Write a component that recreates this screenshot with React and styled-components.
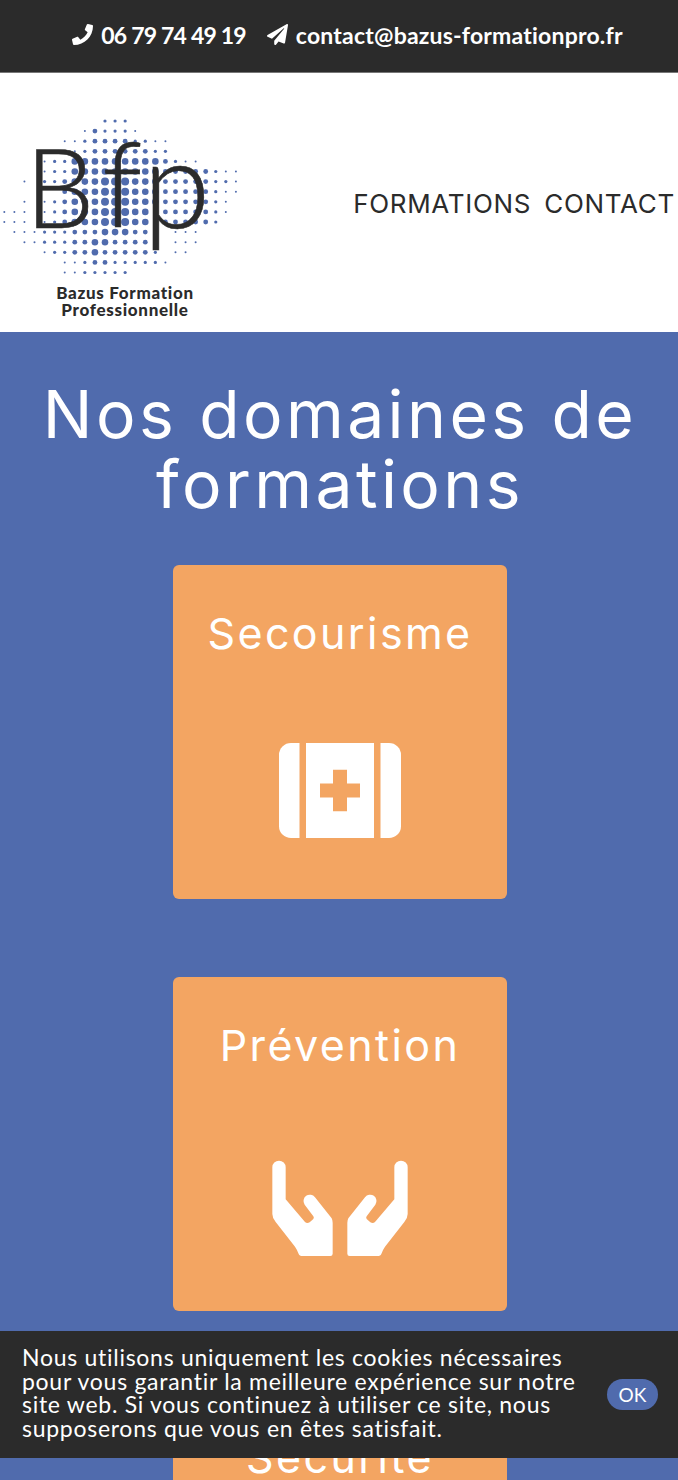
import React from 'react'
import styled, { createGlobalStyle } from 'styled-components'
import { FaPhone, FaPaperPlane } from 'react-icons/fa'

const GlobalStyle = createGlobalStyle`
  html, body {
    margin: 0;
    padding: 0;
    height: 100%;
    overflow: hidden;
    background: #506bad;
  }
  #root {
    height: 100%;
  }
`

const Page = styled.div`
  height: 1480px;
  overflow: hidden;
  font-family: "Inter", "Liberation Sans", sans-serif;
  color: #fff;
`

const TopBar = styled.div`
  display: flex;
  justify-content: center;
  align-items: center;
  gap: 21px;
  box-sizing: content-box;
  height: 69px;
  padding: 0 0 3px 17px;
  background: #2b2b2b;
  border-bottom: 1px solid #777;
`

const TopLink = styled.span`
  display: flex;
  align-items: center;
  gap: 8px;
  font-family: "Lato", "Liberation Sans", sans-serif;
  font-variant-ligatures: none;
  font-weight: 700;
  font-size: 23px;
  letter-spacing: ${p => p.$spacing || '0'};
  white-space: nowrap;
`

const Header = styled.header`
  display: flex;
  align-items: center;
  justify-content: space-between;
  height: 259px;
  background: #fff;
`

const LogoWrap = styled.div`
  align-self: flex-start;
  width: 250px;
  height: 230px;
  margin-top: 27px;
`

const LogoCaption = styled.text`
  font-family: "Lato", "Liberation Sans", sans-serif;
  font-variant-ligatures: none;
  font-weight: 900;
  font-size: 17px;
  letter-spacing: 0.7px;
  fill: #2b2b2b;
  text-anchor: middle;
`

const LogoLetter = styled.text`
  font-family: "Lato", "Liberation Sans", sans-serif;
  font-weight: 300;
  font-size: ${p => p.$size}px;
  fill: #2b2b2b;
  stroke: #2b2b2b;
  stroke-width: 0.6px;
`

const Nav = styled.nav`
  display: flex;
  gap: 13px;
  padding-right: 3px;
  margin-top: 1px;
  font-size: 26px;
  font-weight: 400;
  letter-spacing: 0.7px;
  color: #2b2b2b;
`

const Main = styled.main`
  display: flex;
  flex-direction: column;
  align-items: center;
  padding: 47px 0 0 2px;
`

const Title = styled.h1`
  margin: 0 0 46px;
  width: 640px;
  font-size: 66px;
  line-height: 70px;
  font-weight: 400;
  letter-spacing: 3.4px;
  text-align: center;
`

const CardList = styled.div`
  display: flex;
  flex-direction: column;
  gap: 78px;
`

const Card = styled.div`
  display: flex;
  flex-direction: column;
  align-items: center;
  box-sizing: border-box;
  width: 334px;
  height: 334px;
  padding-top: 41px;
  border-radius: 6px;
  background: #f3a562;
`

const CardTitle = styled.h2`
  margin: 0;
  font-size: 43px;
  line-height: 54px;
  font-weight: 400;
  letter-spacing: 2.4px;
`

const CardIcon = styled.svg`
  display: block;
  margin-top: ${p => p.$offset}px;
`

const CookieBar = styled.div`
  position: fixed;
  left: 0;
  right: 0;
  top: 1331px;
  display: flex;
  align-items: center;
  justify-content: space-between;
  box-sizing: border-box;
  height: 127px;
  padding: 0 20px 0 22px;
  background: #2b2b2b;
`

const CookieText = styled.p`
  margin: 0 0 3px;
  width: 570px;
  font-family: "Lato", "Liberation Sans", sans-serif;
  font-variant-ligatures: none;
  font-size: 23px;
  line-height: 23.5px;
  font-weight: 400;
  letter-spacing: 0.72px;
`

const OkButton = styled.button`
  width: 51px;
  height: 31px;
  padding: 0;
  border: 0;
  border-radius: 16px;
  background: #506bad;
  color: #fff;
  font-family: "Lato", "Liberation Sans", sans-serif;
  font-size: 19px;
`

// halftone of the logo: one string per row, one digit per column, digit = dot size
const DOT_ROWS = [
  '000000000022200000000000',
  '000000001322210000000000',
  '000000112333322110000000',
  '000000012333333220000000',
  '000012244444444432110000',
  '000012244444444433333211',
  '001022344455544433333221',
  '000000344455544433333211',
  '001012344455544433333210',
  '111012344455544333333210',
  '111012344455544333333200',
  '011122233344433201110000',
  '001122233443333201110000',
  '000012233433333201100000',
  '000000112332222210000000',
  '000000112222200000000000',
]
const DOT_SIZES = [0, 1, 1.6, 2.4, 3.3, 4]

const LogoDots = () => (
  <g fill="#506bad">
    {DOT_ROWS.map((row, j) =>
      row.split('').map((d, i) =>
        d === '0' ? null : (
          <circle key={`${j}-${i}`} cx={4.3 + i * 10.07} cy={21 + j * 10.1} r={DOT_SIZES[d]} />
        )
      )
    )}
  </g>
)

const Logo = () => (
  <LogoWrap>
    <svg width="250" height="230" viewBox="0 0 250 230">
      <LogoDots />
      <LogoLetter $size={110} x="25" y="128">B</LogoLetter>
      <LogoLetter $size={118} x="102" y="128">f</LogoLetter>
      <LogoLetter $size={122} x="143" y="128">p</LogoLetter>
      <LogoCaption x="125" y="199">Bazus Formation</LogoCaption>
      <LogoCaption x="125" y="216">Professionnelle</LogoCaption>
    </svg>
  </LogoWrap>
)

const KitIcon = () => (
  <CardIcon $offset={83} width="122" height="95" viewBox="0 0 122 96" preserveAspectRatio="none" fill="#fff">
    <path d="M12 0h8.500v96H12A12 12 0 0 1 0 84V12A12 12 0 0 1 12 0z" />
    <path d="M101.500 0H110a12 12 0 0 1 12 12v72a12 12 0 0 1-12 12h-8.500z" />
    <path fillRule="evenodd" d="M27 0h68v96H27z M54 27v14H41v14h13v14h14V55h13V41H68V27z" />
  </CardIcon>
)

const HANDS_PATH =
  'M37 52a20 20 0 0 1 40 0v96l58 68q6 6 14 1l11-10q3-4 0-8l-26-35a18 18 0 0 1 31-22l50 63q3 6 3 13v93q0 7-7 7h-88q-6 0-8-8q-3-10-10-20l-58-74q-10-12-10-24z'

const HandsIcon = () => (
  <CardIcon $offset={88} width="136" height="97" viewBox="36 30 408 291" fill="#fff">
    <path d={HANDS_PATH} />
    <path d={HANDS_PATH} transform="matrix(-1 0 0 1 480 0)" />
  </CardIcon>
)

const App = () => (
  <Page>
    <GlobalStyle />
    <TopBar>
      <TopLink $spacing="-0.8px">
        <FaPhone size={21} />
        06 79 74 49 19
      </TopLink>
      <TopLink $spacing="0.2px">
        <FaPaperPlane size={21} />
        contact@bazus-formationpro.fr
      </TopLink>
    </TopBar>
    <Header>
      <Logo />
      <Nav>
        <span>FORMATIONS</span>
        <span>CONTACT</span>
      </Nav>
    </Header>
    <Main>
      <Title>Nos domaines de formations</Title>
      <CardList>
        <Card>
          <CardTitle>Secourisme</CardTitle>
          <KitIcon />
        </Card>
        <Card>
          <CardTitle>Prévention</CardTitle>
          <HandsIcon />
        </Card>
        <Card>
          <CardTitle>Sécurité</CardTitle>
        </Card>
      </CardList>
    </Main>
    <CookieBar>
      <CookieText>
        Nous utilisons uniquement les cookies nécessaires pour vous garantir la meilleure
        expérience sur notre site web. Si vous continuez à utiliser ce site, nous supposerons
        que vous en êtes satisfait.
      </CookieText>
      <OkButton>OK</OkButton>
    </CookieBar>
  </Page>
)

export default App
